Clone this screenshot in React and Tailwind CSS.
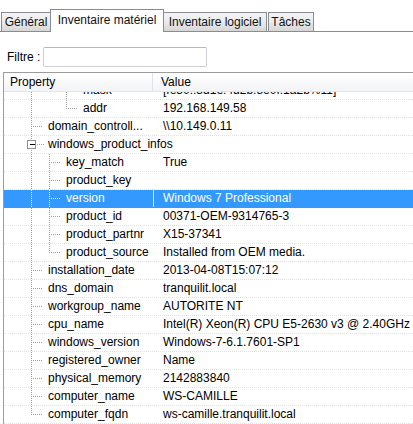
import React from 'react';

const GUIDES = [27.5, 45.5, 62.5];
const TEXT_W = [44, 62, 79];

const rows = [
  { name: 'mask', value: '[fe80::8d1e:4d2b:8e0f:1a2b%11]', level: 2, anc: [true, false] },
  { name: 'addr', value: '192.168.149.58', level: 2, anc: [true, false], last: true },
  { name: 'domain_controll...', value: '\\\\10.149.0.11', level: 0, anc: [] },
  { name: 'windows_product_infos', value: '', level: 0, anc: [], open: true },
  { name: 'key_match', value: 'True', level: 1, anc: [true] },
  { name: 'product_key', value: '', level: 1, anc: [true] },
  { name: 'version', value: 'Windows 7 Professional', level: 1, anc: [true], selected: true },
  { name: 'product_id', value: '00371-OEM-9314765-3', level: 1, anc: [true] },
  { name: 'product_partnr', value: 'X15-37341', level: 1, anc: [true] },
  { name: 'product_source', value: 'Installed from OEM media.', level: 1, anc: [true], last: true },
  { name: 'installation_date', value: '2013-04-08T15:07:12', level: 0, anc: [] },
  { name: 'dns_domain', value: 'tranquilit.local', level: 0, anc: [] },
  { name: 'workgroup_name', value: 'AUTORITE NT', level: 0, anc: [] },
  { name: 'cpu_name', value: 'Intel(R) Xeon(R) CPU E5-2630 v3 @ 2.40GHz', level: 0, anc: [] },
  { name: 'windows_version', value: 'Windows-7-6.1.7601-SP1', level: 0, anc: [] },
  { name: 'registered_owner', value: 'Name', level: 0, anc: [] },
  { name: 'physical_memory', value: '2142883840', level: 0, anc: [] },
  { name: 'computer_name', value: 'WS-CAMILLE', level: 0, anc: [] },
  { name: 'computer_fqdn', value: 'ws-camille.tranquilit.local', level: 0, anc: [], last: true },
];

function Guides({ row }) {
  const stroke = row.selected ? '#e8f2ff' : '#a0a0a0';
  const dash = { stroke, strokeWidth: 1, strokeDasharray: '1 1', shapeRendering: 'crispEdges' };
  const x = GUIDES[row.level];
  return (
    <svg width={TEXT_W[row.level]} height="17" className="shrink-0 overflow-visible">
      {/* ancestor lines that keep going */}
      {row.anc.map((on, i) => on && <line key={i} x1={GUIDES[i]} y1="0" x2={GUIDES[i]} y2="18" style={dash} />)}
      <line x1={x} y1="0" x2={x} y2={row.last ? 8.5 : 18} style={dash} />
      {row.open ? (
        <>
          <line x1={x + 5} y1="8.5" x2={x + 13} y2="8.5" style={dash} />
          <rect x={x - 4} y="4.5" width="8" height="8" fill="#fff" stroke="#919191" shapeRendering="crispEdges" />
          <line x1={x - 2} y1="8.5" x2={x + 3} y2="8.5" stroke="#000" shapeRendering="crispEdges" />
        </>
      ) : (
        <line x1={x + 1} y1="8.5" x2={x + 11} y2="8.5" style={dash} />
      )}
    </svg>
  );
}

function Tab({ label, active, className }) {
  if (active) {
    return (
      <div className={`h-[23px] -mb-px flex items-center justify-center border border-b-0 border-[#898c95] bg-white text-[#111] ${className}`}>
        <span className="-mt-[2px]">{label}</span>
      </div>
    );
  }
  return (
    <div className={`h-[19px] flex items-center justify-center border border-b-0 border-[#898c95] bg-linear-to-b from-[#f4f4f4] via-[#ebebeb] to-[#d6d6d6] text-[#111] ${className}`}>
      {label}
    </div>
  );
}

export default function App() {
  return (
    <div className="w-[413px] h-[424px] overflow-hidden bg-white text-[12px] text-black font-['Liberation_Sans',Arial,sans-serif]">
      {/* Tabs */}
      <div className="flex items-end h-[32px] border-b border-[#898c95]">
        <Tab label="Général" className="ml-[1px] w-[50px]" />
        <Tab label="Inventaire matériel" active className="-ml-px w-[114px] relative" />
        <Tab label="Inventaire logiciel" className="-ml-px w-[104px]" />
        <Tab label="Tâches" className="ml-[1px] w-[46px]" />
      </div>

      {/* Filter */}
      <div className="flex items-center mt-[15px] pl-[7px] gap-[3px] h-[20px]">
        <span>Filtre :</span>
        <div className="w-[164px] h-[20px] border border-[#cdd0d6] border-t-[#b5b8bf] rounded-[2px] bg-white" />
      </div>

      {/* Tree list */}
      <div className="mt-[5px] ml-[3px] h-[352px] border-l border-t border-[#9c9c9c] overflow-hidden">
        <div className="flex h-[19px] border-b border-[#e4e5ea] bg-linear-to-b from-white to-[#f3f4f8] leading-[18px]">
          <div className="w-[149px] pl-[6px] border-r border-[#e0e1e6]">Property</div>
          <div className="pl-[8px]">Value</div>
        </div>
        <div className="h-[332px] overflow-hidden">
          <div className="-mt-[10px]">
            {rows.map((r, i) => (
              <div
                key={i}
                className={`flex h-[18px] leading-[17px] whitespace-nowrap border-b border-dotted ${
                  r.selected ? 'bg-[#3399ff] text-white border-[#3399ff]' : 'border-[#e2e2e2]'
                }`}
              >
                <div className={`flex w-[149px] shrink-0 ${r.value ? 'overflow-hidden' : 'overflow-visible'}`}>
                  <Guides row={r} />
                  <span>{r.name}</span>
                </div>
                <div className={`pl-[9px] ${r.selected ? 'border-l border-[#cfe4ff]' : 'border-l border-transparent'}`}>
                  {r.value}
                </div>
              </div>
            ))}
          </div>
        </div>
      </div>
    </div>
  );
}
